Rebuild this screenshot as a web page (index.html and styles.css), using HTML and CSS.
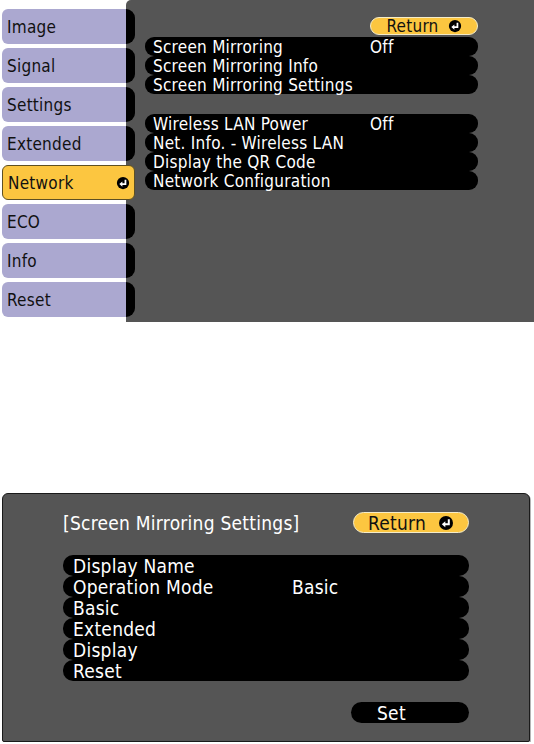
FILE: index.html
```html
<!DOCTYPE html>
<html>
<head>
  <title>Network menu</title>
  <meta charset="utf-8">
  <link rel="stylesheet" href="styles.css">
</head>
<body>
  <!-- main menu -->
  <div class="osd">
    <ul class="menu">
      <li class="tab">Image</li>
      <li class="tab">Signal</li>
      <li class="tab">Settings</li>
      <li class="tab">Extended</li>
      <li class="tab active">Network
        <svg class="enter" viewBox="0 0 16 16"><circle cx="8" cy="8" r="7" fill="#000"/><path d="M10.8 4.2V9.2H6.5" stroke="#fff" stroke-width="2" fill="none"/><path d="M7.3 6.2L3.8 9.2L7.3 12.2Z" fill="#fff"/></svg>
      </li>
      <li class="tab">ECO</li>
      <li class="tab">Info</li>
      <li class="tab">Reset</li>
    </ul>
    <div class="panel">
      <div class="panel-inner">
        <div class="panel-head">
          <span class="btn-return">Return
            <svg class="enter" viewBox="0 0 16 16"><circle cx="8" cy="8" r="7" fill="#000"/><path d="M10.8 4.2V9.2H6.5" stroke="#fff" stroke-width="2" fill="none"/><path d="M7.3 6.2L3.8 9.2L7.3 12.2Z" fill="#fff"/></svg>
          </span>
        </div>
        <ul class="rows rows-first">
          <li class="row"><span class="label">Screen Mirroring</span><span>Off</span></li>
          <li class="row"><span class="label">Screen Mirroring Info</span></li>
          <li class="row"><span class="label">Screen Mirroring Settings</span></li>
        </ul>
        <ul class="rows rows-second">
          <li class="row"><span class="label">Wireless LAN Power</span><span>Off</span></li>
          <li class="row"><span class="label">Net. Info. - Wireless LAN</span></li>
          <li class="row"><span class="label">Display the QR Code</span></li>
          <li class="row"><span class="label">Network Configuration</span></li>
        </ul>
      </div>
    </div>
  </div>
  <!-- end of main menu -->

  <!-- settings dialog -->
  <div class="dialog">
    <div class="dialog-head">
      <span class="dialog-title">[Screen Mirroring Settings]</span>
      <span class="btn-return btn-return-lg">Return
        <svg class="enter" viewBox="0 0 16 16"><circle cx="8" cy="8" r="7" fill="#000"/><path d="M10.8 4.2V9.2H6.5" stroke="#fff" stroke-width="2" fill="none"/><path d="M7.3 6.2L3.8 9.2L7.3 12.2Z" fill="#fff"/></svg>
      </span>
    </div>
    <ul class="rows rows-lg">
      <li class="row"><span class="label">Display Name</span></li>
      <li class="row"><span class="label">Operation Mode</span><span>Basic</span></li>
      <li class="row"><span class="label">Basic</span></li>
      <li class="row"><span class="label">Extended</span></li>
      <li class="row"><span class="label">Display</span></li>
      <li class="row"><span class="label">Reset</span></li>
    </ul>
    <div class="dialog-foot">
      <span class="btn-set">Set</span>
    </div>
  </div>
  <!-- end of settings dialog -->
</body>
</html>
```

FILE: styles.css
```css
body {
  margin: 0;
  background: #fff;
  font-family: "DejaVu Sans Condensed", "DejaVu Sans", sans-serif;
  font-size: 17px;
  letter-spacing: 0.25px;
}
ul {
  list-style: none;
  margin: 0;
  padding: 0;
}

/* main menu */
.osd {
  display: flex;
  height: 322px;
}
.menu {
  width: 124px;
  padding: 9px 0 0 2px;
  display: flex;
  flex-direction: column;
  gap: 4px;
  position: relative;
  z-index: 1;
}
.tab {
  position: relative;
  box-sizing: border-box;
  height: 35px;
  padding-left: 5px;
  display: flex;
  align-items: center;
  background: #aba8d0;
  border-radius: 6px 0 0 6px;
  color: #111;
}
.tab::after {
  content: "";
  position: absolute;
  left: 100%;
  top: 0;
  bottom: 0;
  width: 9px;
  background: #000;
  border-radius: 0 9px 9px 0;
}
.tab.active {
  margin-right: -9px;
  padding: 0 4px 0 5px;
  justify-content: space-between;
  background: #fcc640;
  border: 1px solid #5e5023;
  border-radius: 6px;
}
.tab.active::after {
  display: none;
}
.enter {
  width: 14px;
  height: 14px;
}
.panel {
  flex: 1;
  background: #555;
  border-radius: 5px 0 0 0;
  padding: 17px 0 0 19px;
}
.panel-inner {
  width: 333px;
}
.panel-head {
  display: flex;
  justify-content: flex-end;
}
.btn-return {
  box-sizing: border-box;
  width: 108px;
  height: 18px;
  display: flex;
  align-items: center;
  justify-content: center;
  gap: 9px;
  background: #fcc640;
  border: 1px solid #f5ecc8;
  border-radius: 9px;
  color: #111;
}
.btn-return-lg {
  width: 116px;
  height: 21px;
  border-radius: 11px;
  gap: 12px;
}
.btn-return-lg .enter {
  width: 16px;
  height: 16px;
}
.rows-first {
  margin-top: 2px;
}
.rows-second {
  margin-top: 20px;
}
.row {
  height: 19px;
  padding-left: 8px;
  display: flex;
  align-items: center;
  background: #000;
  border-radius: 9px;
  color: #fff;
}
.row .label {
  width: 217px;
}

/* settings dialog */
.dialog {
  box-sizing: border-box;
  width: 528px;
  height: 249px;
  margin: 171px 0 0 2px;
  padding: 18px 0 0 60px;
  background: #555;
  border: 1px solid #1a1a1a;
  border-radius: 6px 6px 2px 2px;
  box-shadow: 1px 1px 0 #b5b5b5;
  font-size: 19px;
}
.dialog-head {
  width: 406px;
  height: 21px;
  display: flex;
  align-items: center;
  justify-content: space-between;
}
.dialog-title {
  color: #fff;
}
.rows-lg {
  width: 406px;
  margin-top: 22px;
}
.rows-lg .row {
  height: 21px;
  padding-left: 10px;
  border-radius: 10px;
}
.rows-lg .row .label {
  width: 219px;
}
.dialog-foot {
  width: 406px;
  margin-top: 21px;
  display: flex;
  justify-content: flex-end;
}
.btn-set {
  box-sizing: border-box;
  width: 118px;
  height: 21px;
  padding-left: 26px;
  display: flex;
  align-items: center;
  background: #000;
  border-radius: 11px;
  color: #fff;
}
```
